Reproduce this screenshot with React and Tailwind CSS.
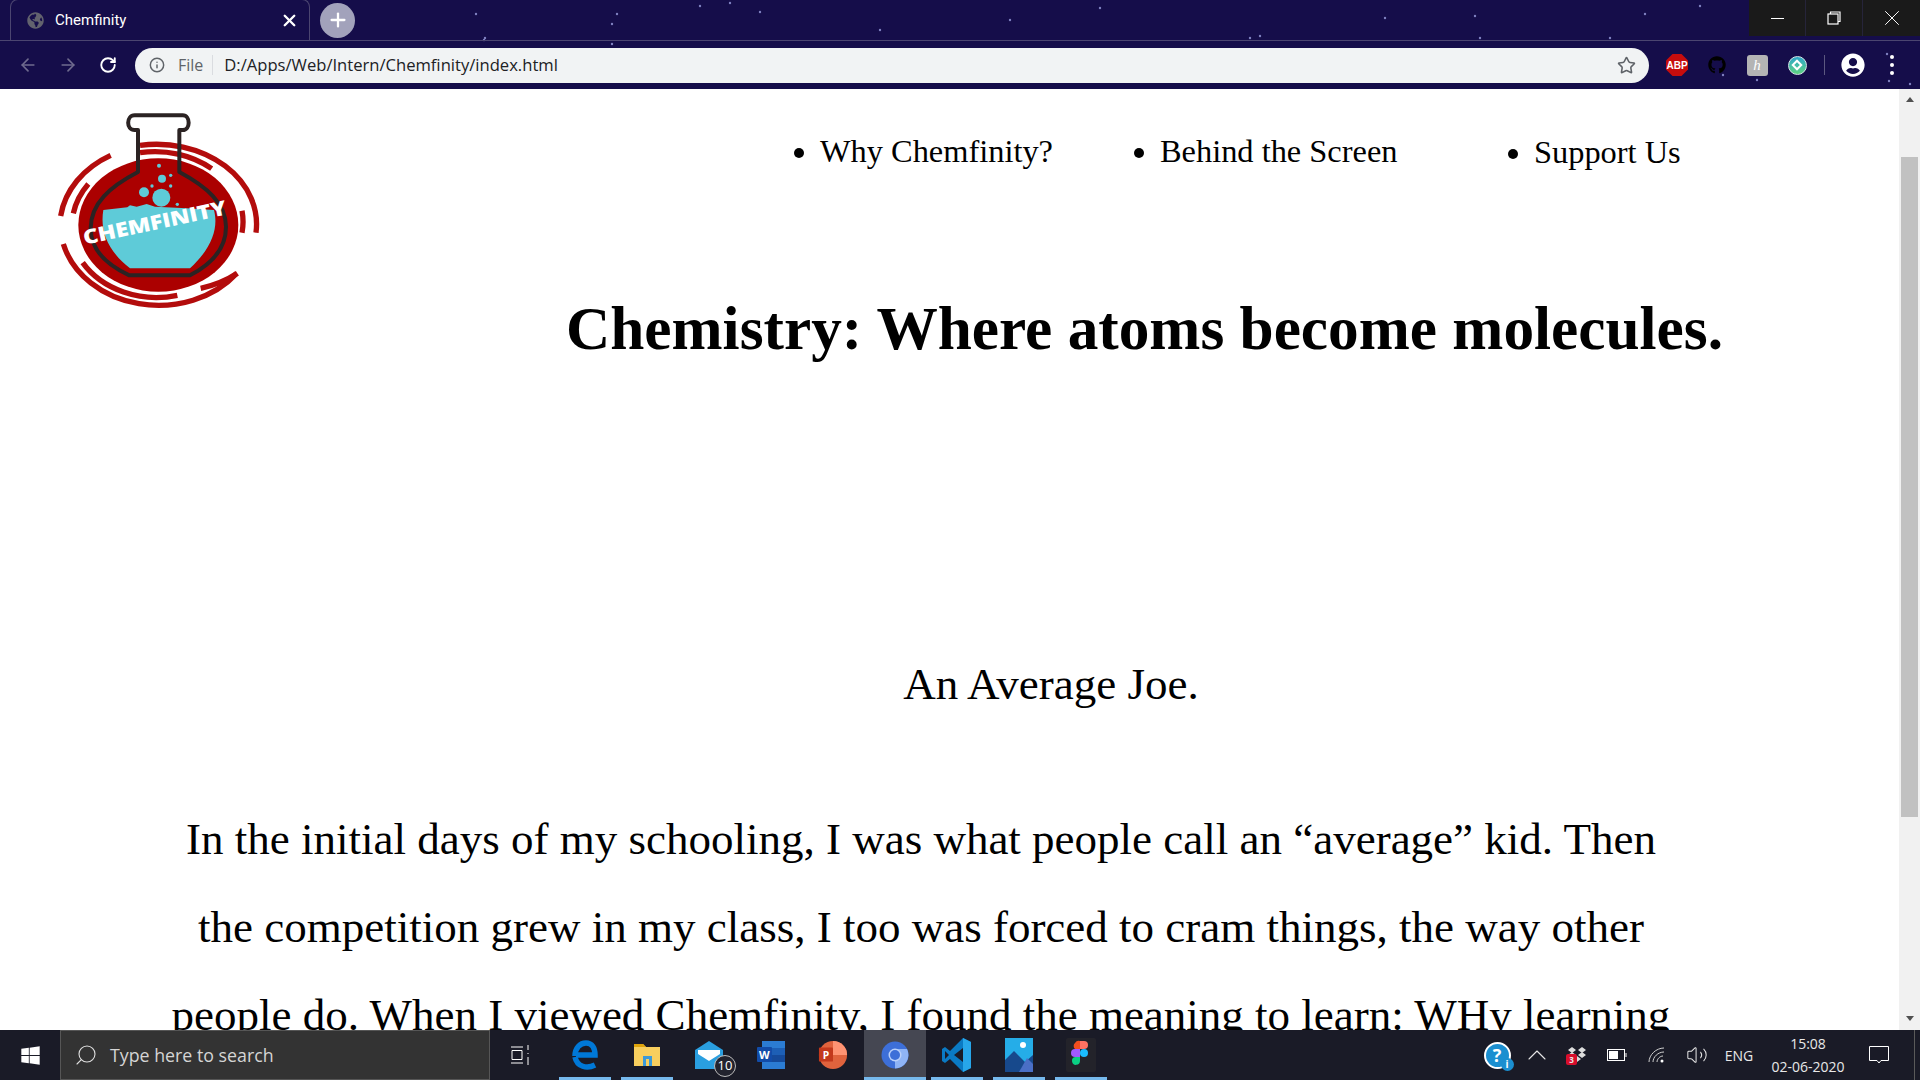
import { ArrowLeft, ArrowRight, RotateCw, Star, Info, X, Plus, ChevronUp, Search, Volume2 } from 'lucide-react';
import { FaGithub, FaWindows, FaUserCircle, FaGlobeAmericas } from 'react-icons/fa';

const serif = { fontFamily: '"Liberation Serif", serif' };

const stars = [
  [476, 14], [484, 40], [617, 14], [612, 24], [485, 38], [700, 6], [730, 3], [760, 12], [880, 30], [1010, 20],
  [1100, 8], [1250, 38], [1385, 18], [1475, 16], [1480, 38], [1610, 38], [1645, 14], [1700, 6], [1723, 75], [1757, 80],
  [1887, 54], [1889, 81], [1910, 84], [612, 44], [460, 60], [1260, 36],
];

function Logo() {
  return (
    <svg viewBox="0 0 720 660" className="h-[220px] w-[240px]">
      <ellipse cx="355" cy="375" rx="240" ry="200" fill="#ab0000" />
      <g fill="none" stroke="#b30c0c" strokeWidth="16">
        <path d="M62 348 A295 245 0 0 1 212 166" />
        <path d="M100 340 A258 215 0 0 1 145 252" />
        <path d="M300 136 A300 240 0 0 1 648 398" />
        <path d="M300 158 A262 215 0 0 1 515 206" />
        <path d="M70 432 A295 245 0 0 0 590 520" />
        <path d="M128 488 A258 215 0 0 0 412 586" />
        <path d="M482 565 A290 240 0 0 0 592 520" />
        <path d="M606 332 A250 210 0 0 1 606 398" />
      </g>
      <path d="M190 330 L262 322 L270 316 L290 320 L320 312 L345 320 L440 325 L522 330 C535 380 520 440 450 505 L270 505 C200 450 180 390 190 330Z" fill="#5ecbd8" />
      <g fill="#5ecbd8">
        <circle cx="364" cy="293" r="27" />
        <circle cx="312" cy="277" r="15" />
        <circle cx="366" cy="236" r="12" />
        <circle cx="357" cy="197" r="6" />
        <circle cx="392" cy="226" r="5" />
        <circle cx="336" cy="258" r="5" />
        <circle cx="392" cy="258" r="5" />
        <circle cx="412" cy="313" r="5" />
      </g>
      <path d="M294 90 L294 216 C210 260 152 310 152 385 C152 440 190 490 268 526 L450 526 C520 490 558 440 558 380 C558 310 500 260 418 216 L418 90 L428 90 C452 90 452 46 428 46 L284 46 C258 46 258 90 284 90 Z" fill="none" stroke="#2b2323" strokeWidth="12" strokeLinejoin="round" />
      <text x="134" y="434" fill="#ffffff" fontSize="60" fontWeight="800" transform="rotate(-12 134 434)" textLength="438" lengthAdjust="spacingAndGlyphs" style={{ fontFamily: '"Open Sans", sans-serif' }}>CHEMFINITY</text>
    </svg>
  );
}

function TabStrip() {
  return (
    <div className="relative flex h-[41px] items-end border-b border-[#4b4570]">
      <div className="ml-[10px] flex h-[41px] w-[300px] items-center rounded-t-lg border border-b-0 border-[#4b4570] bg-[#150d4a] pt-[1px]">
        <FaGlobeAmericas size={17} className="ml-[16px] text-[#62626e]" />
        <span className="ml-[11px] flex-1 text-[15px] text-white" style={{ fontFamily: 'Roboto, sans-serif' }}>Chemfinity</span>
        <X size={19} strokeWidth={3} className="mr-[10px] text-white" />
      </div>
      <div className="ml-[10px] flex h-[35px] w-[35px] items-center justify-center self-center rounded-full bg-[#a2a2bb]">
        <Plus size={22} strokeWidth={2.5} className="text-white" />
      </div>
      <div className="absolute right-0 top-0 flex h-[36px] w-[171px] bg-[#1a1a1a] text-white">
        <div className="flex w-[57px] items-center justify-center border-r border-[#26243a]">
          <div className="h-px w-[13px] bg-white" />
        </div>
        <div className="flex w-[57px] items-center justify-center border-r border-[#26243a]">
          <svg width="14" height="14" viewBox="0 0 14 14" fill="none" stroke="#fff" strokeWidth="1.2"><rect x="1" y="3" width="10" height="10" /><path d="M3.5 3V1H13V10.5H11" /></svg>
        </div>
        <div className="flex w-[57px] items-center justify-center"><X size={26} strokeWidth={0.9} /></div>
      </div>
    </div>
  );
}

function Toolbar() {
  return (
    <div className="flex h-[48px] items-center">
      <div className="flex w-[135px] shrink-0 items-center pl-[18px]">
        <ArrowLeft size={20} className="text-[#6f6b8e]" />
        <ArrowRight size={20} className="ml-[20px] text-[#6f6b8e]" />
        <RotateCw size={18} strokeWidth={2.5} className="ml-[21px] text-white" />
      </div>
      <div className="flex h-[35px] w-[1514px] shrink-0 items-center rounded-full bg-[#f1f3f4]" style={{ fontFamily: '"Open Sans", sans-serif' }}>
        <Info size={16} strokeWidth={2.2} className="ml-[14px] text-[#5f6368]" />
        <span className="ml-[13px] text-[16px] leading-[20px] text-[#5f6368]">File</span>
        <span className="ml-[9px] h-[20px] w-px bg-[#dadce0]" />
        <span className="ml-[11px] flex-1 text-[16.6px] leading-[20px] text-[#202124]">D:/Apps/Web/Intern/Chemfinity/index.html</span>
        <Star size={19} strokeWidth={2} className="mr-[13px] text-[#5f6368]" />
      </div>
      <div className="ml-[8px] flex items-center">
        <div className="flex w-[40px] justify-center">
          <svg width="22" height="22" viewBox="0 0 22 22">
            <polygon points="6.500,0 15.500,0 22,6.500 22,15.500 15.500,22 6.500,22 0,15.500 0,6.500" fill="#c70d0d" />
            <text x="11" y="15" textAnchor="middle" fontSize="10" fontWeight="700" fill="#fff" style={{ fontFamily: '"Liberation Sans", sans-serif' }}>ABP</text>
          </svg>
        </div>
        <div className="flex w-[40px] justify-center"><FaGithub size={18} className="text-black" /></div>
        <div className="flex w-[40px] justify-center">
          <div className="flex h-[21px] w-[21px] items-center justify-center rounded-[3px] bg-[#b4b4b4] text-[15px] italic text-white" style={serif}>h</div>
        </div>
        <div className="flex w-[40px] justify-center">
          <div className="flex h-[19px] w-[19px] items-center justify-center rounded-full border border-[#d6e8e8] bg-gradient-to-b from-[#2fa6c7] to-[#5fd27e]">
            <div className="h-[8px] w-[8px] rotate-45 border-2 border-white" />
          </div>
        </div>
        <div className="ml-[7px] h-[20px] w-px bg-[#5c5880]" />
        <div className="ml-[16px] flex h-[24px] w-[24px] items-center justify-center rounded-full bg-[#150d4a]">
          <FaUserCircle size={24} className="text-white" />
        </div>
        <div className="ml-[25px] flex flex-col gap-[4px]">
          <span className="h-[4px] w-[4px] rounded-full bg-white" />
          <span className="h-[4px] w-[4px] rounded-full bg-white" />
          <span className="h-[4px] w-[4px] rounded-full bg-white" />
        </div>
      </div>
    </div>
  );
}

function Scrollbar() {
  return (
    <div className="flex w-[21px] shrink-0 flex-col items-center bg-[#f1f1f1]">
      <div className="mt-[8px] h-0 w-0 border-x-[4px] border-b-[5px] border-x-transparent border-b-[#505050]" />
      <div className="mt-[55px] h-[660px] w-[17px] bg-[#c1c1c1]" />
      <div className="mt-[199px] h-0 w-0 border-x-[4px] border-t-[5px] border-x-transparent border-t-[#505050]" />
    </div>
  );
}

function Page() {
  return (
    <div className="flex h-[941px] overflow-hidden bg-white text-black" style={serif}>
      <div className="w-[1899px] shrink-0">
        <div className="flex">
          <div className="ml-[40px] mt-[11px] w-[240px] shrink-0"><Logo /></div>
          <div className="flex-1">
            <ul className="ml-[540px] mt-[44px] flex list-disc text-[32.4px] leading-[37px]">
              <li className="w-[340px]">Why Chemfinity?</li>
              <li className="w-[374px]">Behind the Screen</li>
              <li className="mt-px">Support Us</li>
            </ul>
            <h1 className="ml-[286px] mt-[120px] whitespace-nowrap text-[61.3px] font-bold leading-[74px]">Chemistry: Where atoms become molecules.</h1>
          </div>
        </div>
        <p className="ml-[204px] mt-[293px] w-[1694px] text-center text-[45px] leading-[52px]">An Average Joe.</p>
        <div className="ml-[121px] mt-[85px] w-[1600px] text-center text-[45px] leading-[88px]">
          <p>In the initial days of my schooling, I was what people call an “average” kid. Then</p>
          <p>the competition grew in my class, I too was forced to cram things, the way other</p>
          <p>people do. When I viewed Chemfinity, I found the meaning to learn: WHy learning</p>
        </div>
      </div>
      <Scrollbar />
    </div>
  );
}

function TaskIcon({ children, active, line }) {
  return (
    <div className={`relative flex h-[50px] w-[62px] items-center justify-center ${active ? 'bg-[#454752]' : ''}`}>
      {children}
      {line && <div className={`absolute bottom-0 h-[3px] bg-[#76b9ed] ${active ? 'inset-x-0' : 'inset-x-[5px]'}`} />}
    </div>
  );
}

function Taskbar() {
  return (
    <div className="flex h-[50px] items-center bg-[#1a1b27] text-white" style={{ fontFamily: '"Open Sans", sans-serif' }}>
      <div className="flex w-[60px] justify-center"><FaWindows size={21} /></div>
      <div className="flex h-[50px] w-[430px] items-center border border-[#565656] bg-[#333333]">
        <Search size={24} strokeWidth={1.1} className="ml-[13px] -scale-x-100 text-[#e0e0e0]" />
        <span className="ml-[12px] text-[17.8px] text-[#d5d5d5]">Type here to search</span>
      </div>
      <div className="flex w-[64px] justify-center">
        <svg width="20" height="22" viewBox="0 0 20 22" fill="none" stroke="#fff" strokeWidth="1" className="mr-[2px]"><path d="M0 3H12M0 19H12M1 6.5H11V15.5H1ZM17 1V6M17 9V10M17 13V21" /></svg>
      </div>
      <div className="flex">
        <TaskIcon line>
          <svg width="26" height="30" viewBox="0 0 26 30" fill="none" stroke="#0078d7" strokeWidth="5.500"><path d="M3 16C3 8 8 3 14 3C20 3 23 8 23 15H4" /><path d="M23 25C15 29 5 27 3 17" /></svg>
        </TaskIcon>
        <TaskIcon line>
          <svg width="28" height="26" viewBox="0 0 28 26"><path d="M1 2H10L13 5H27V24H1Z" fill="#f8cf5e" /><path d="M1 2H10L13 5H1Z" fill="#dfa40b" /><path d="M10 14H19V24H16V17H13V24H10Z" fill="#3c9ad8" /></svg>
        </TaskIcon>
        <TaskIcon>
          <div className="relative">
            <svg width="30" height="30" viewBox="0 0 30 30"><path d="M1 10L15 1L29 10V29H1Z" fill="#2a9fe0" /><path d="M4 10H26V14L15 21L4 14Z" fill="#fff" /></svg>
            <span className="absolute -bottom-[7px] -right-[12px] flex h-[22px] w-[22px] items-center justify-center rounded-full border border-[#bbb] bg-[#22232e] text-[13px]">10</span>
          </div>
        </TaskIcon>
        <TaskIcon>
          <svg width="30" height="30" viewBox="0 0 30 30"><path d="M6 1H29V29H6Z" fill="#2b7cd3" /><path d="M6 8H29V15H6Z" fill="#1d5fb5" /><path d="M6 15H29V22H6Z" fill="#154a9a" /><rect x="1" y="7" width="15" height="15" rx="1" fill="#124ca8" /><text x="3" y="19" fontSize="11" fontWeight="700" fill="#fff">W</text></svg>
        </TaskIcon>
        <TaskIcon>
          <svg width="30" height="32" viewBox="0 0 32 32"><circle cx="16" cy="16" r="15" fill="#e0633d" /><path d="M16 1A15 15 0 0 1 31 16H16Z" fill="#ff9473" /><rect x="1" y="8" width="15" height="15" rx="1" fill="#c3391c" /><text x="5" y="20" fontSize="11" fontWeight="700" fill="#fff">P</text></svg>
        </TaskIcon>
        <TaskIcon active line>
          <svg width="28" height="28" viewBox="0 0 28 28"><circle cx="14" cy="14" r="13.5" fill="#3d6fd8" /><path d="M14 8H26A13.5 13.5 0 0 1 14 27.5Z" fill="#8fb4f5" /><circle cx="14" cy="14" r="6.5" fill="#b9d0fa" /><circle cx="14" cy="14" r="5" fill="#3d6fd8" /></svg>
        </TaskIcon>
        <TaskIcon line>
          <svg width="30" height="36" viewBox="0 0 30 36"><path d="M21 1L29 5V31L21 35L8 22L3 26L0 24V12L3 10L8 14Z" fill="#0a7ac4" /><path d="M21 1L29 5V31L21 35Z" fill="#27a6ea" /><path d="M21 11L12 18L21 25Z" fill="#1a1b27" /><path d="M3 14L7 18L3 22Z" fill="#1a1b27" /></svg>
        </TaskIcon>
        <TaskIcon line>
          <svg width="28" height="34" viewBox="0 0 28 34"><rect width="28" height="34" fill="#25ade8" /><path d="M0 34V22L9 13L20 24L28 17V34Z" fill="#17498c" /><path d="M14 34L22 20L28 26V34Z" fill="#4a6fc6" /><circle cx="18" cy="7" r="3" fill="#fff" /></svg>
        </TaskIcon>
        <TaskIcon line>
          <svg width="30" height="34" viewBox="0 0 30 34"><rect width="30" height="34" rx="2" fill="#23232a" /><path d="M9 5A4.500 4.500 0 0 1 14 3V11H9A4 4 0 0 1 9 5Z" fill="#f24e1e" /><path d="M14 3H18A4 4 0 0 1 18 11H14Z" fill="#ff7262" /><path d="M14 11H9A4 4 0 0 0 9 19H14Z" fill="#a259ff" /><circle cx="18" cy="15" r="4" fill="#1abcfe" /><path d="M9 19H14V23A4 4 0 1 1 9 19Z" fill="#0acf83" /></svg>
        </TaskIcon>
      </div>
      <div className="ml-auto flex items-center text-[#e8e8e8]">
        <div className="flex w-[40px] justify-center">
          <div className="relative flex h-[27px] w-[27px] items-center justify-center rounded-full border-2 border-white bg-[#1b8fd0] text-[18px] font-bold text-white">
            ?
            <span className="absolute -bottom-[4px] -right-[5px] flex h-[13px] w-[13px] items-center justify-center rounded-full bg-[#1b8fd0] text-[10px]">i</span>
          </div>
        </div>
        <div className="flex w-[40px] justify-center"><ChevronUp size={32} strokeWidth={0.8} /></div>
        <div className="flex w-[40px] justify-center">
          <div className="relative">
            <svg width="20" height="16" viewBox="0 0 20 16" fill="#ddd"><path d="M1 3L5 0L9 3L5 6ZM11 3L15 0L19 3L15 6ZM1 8L5 5L9 8L5 11ZM11 8L15 5L19 8L15 11ZM6 12L10 9L14 12L10 15Z" /></svg>
            <span className="absolute -left-px bottom-[-2px] flex h-[11px] w-[11px] items-center justify-center rounded-[2px] bg-[#d80e2c] text-[8px] font-bold">3</span>
          </div>
        </div>
        <div className="flex w-[40px] justify-center">
          <svg width="20" height="12" viewBox="0 0 20 12" fill="none" stroke="#fff"><rect x="0.500" y="0.500" width="17" height="11" /><rect x="2" y="2" width="9" height="8" fill="#fff" stroke="none" /><path d="M19 4V8" /></svg>
        </div>
        <div className="flex w-[40px] justify-center">
          <svg width="18" height="16" viewBox="0 0 18 16" fill="none" stroke="#cfcfcf"><path d="M1 15C1 8 8 1 16 1M5 15C5 10 10 5 16 5M9 15C9 12 12 9 15 9" /><circle cx="14" cy="14" r="1.500" fill="#fff" stroke="none" /></svg>
        </div>
        <div className="flex w-[40px] justify-center"><Volume2 size={22} strokeWidth={1.1} /></div>
        <div className="flex w-[44px] justify-center text-[14px]">ENG</div>
        <div className="flex w-[94px] flex-col items-center text-[14px] leading-[23px]">
          <span>15:08</span>
          <span>02-06-2020</span>
        </div>
        <div className="flex w-[48px] justify-center">
          <svg width="20" height="20" viewBox="0 0 20 20" fill="none" stroke="#fff" strokeWidth="1"><path d="M0.500 1.500H19.500V15.500H12L10 18L8 15.500H0.500Z" /></svg>
        </div>
        <div className="w-[17px]"><div className="ml-[11px] h-[50px] w-px bg-[#5a5a5a]" /></div>
      </div>
    </div>
  );
}

export default function App() {
  return (
    <div className="flex h-[1080px] w-[1920px] flex-col overflow-hidden">
      <div className="relative h-[89px] shrink-0 bg-[#150d4a]">
        <svg className="absolute inset-0 h-[89px] w-[1920px]">
          {stars.map(([x, y], i) => (
            <circle key={i} cx={x} cy={y} r="1.2" fill="#7f80c0" />
          ))}
        </svg>
        <div className="relative">
          <TabStrip />
          <Toolbar />
        </div>
      </div>
      <Page />
      <Taskbar />
    </div>
  );
}
